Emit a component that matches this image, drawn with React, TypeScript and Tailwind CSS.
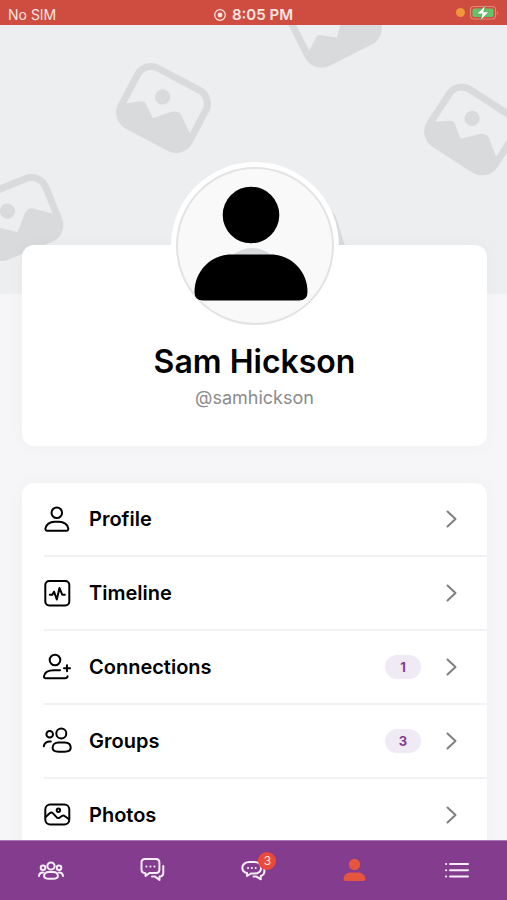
import React from 'react';

const Placeholder = ({ transform }: { transform: string }) => (
  <g transform={transform}>
    <rect x="-38.5" y="-32.5" width="77" height="65" rx="15" fill="none" stroke="#d9dadc" strokeWidth="7" />
    <path
      d="M-38 15.500L-23 4.500Q-20 2.500-17 5L-4.500 14L9 -0.500Q15.500 -6 21 -0.500L38 12V18A15 15 0 0 1 24 33H-24A15 15 0 0 1-38 18Z"
      fill="#d9dadc"
    />
    <circle cx="-6" cy="-9.300" r="7.600" fill="#d9dadc" />
  </g>
);

const Cover = () => (
  <svg viewBox="0 25 507 269" preserveAspectRatio="xMidYMid slice" className="block h-[269px] w-full bg-[#edeef0]" aria-hidden="true">
    <Placeholder transform="translate(163.500 108) rotate(28)" />
    <Placeholder transform="translate(472 129.500) rotate(33)" />
    <Placeholder transform="translate(16.500 217.500) rotate(-22)" />
    <Placeholder transform="translate(334.500 23) rotate(-27)" />
    <Placeholder transform="translate(302 249) rotate(-17)" />
  </svg>
);

const Icon = ({ children }: { children: React.ReactNode }) => (
  <svg
    viewBox="0 0 30 30"
    className="h-[30px] w-[30px] shrink-0"
    fill="none"
    stroke="currentColor"
    strokeWidth="2"
    strokeLinecap="round"
    strokeLinejoin="round"
    aria-hidden="true"
  >
    {children}
  </svg>
);

const menuItems = [
  {
    label: 'Profile',
    icon: (
      <>
        <circle cx="14.8" cy="8.700" r="5.300" />
        <path d="M3.400 24.500C3.800 20.500 8 17.700 12.500 17.700H17C21.800 17.700 26 20.500 26.300 24.500C26.400 26 25.700 26.700 24.400 26.700H5.300C4 26.700 3.300 26 3.400 24.500Z" />
      </>
    ),
  },
  {
    label: 'Timeline',
    icon: (
      <>
        <rect x="3.300" y="3" width="24" height="24.500" rx="4" />
        <path d="M7.800 16.700H10.300L12 13.700L14.800 21.500L17.500 10L20.200 16.700H22.800" />
      </>
    ),
  },
  {
    label: 'Connections',
    count: 1,
    icon: (
      <>
        <circle cx="13" cy="8" r="5.300" />
        <path d="M18 18.200H12C6.500 18.200 2.500 20.500 2 24.300C1.800 25.700 2.500 26.300 3.800 26.300H23C24.400 26.300 25.300 25.600 25.600 24.300" />
        <path d="M25 13.300V19.300M22 16.300H28" />
      </>
    ),
  },
  {
    label: 'Groups',
    count: 3,
    icon: (
      <>
        <circle cx="7.700" cy="8.300" r="3.300" />
        <circle cx="19.300" cy="7.500" r="5" />
        <path d="M16.500 16.500H22.500C26.500 16.500 28.700 18.800 28.700 21.800C28.700 24.800 26 25.700 22.500 25.700H16.500C12.500 25.700 10.600 24.600 10.600 21.800C10.600 18.600 13 16.500 16.500 16.500Z" />
        <path d="M8.800 15.500C4.500 15.300 2.300 16.500 1.800 20.300" />
      </>
    ),
  },
  {
    label: 'Photos',
    icon: (
      <>
        <rect x="3.300" y="4.500" width="24" height="20" rx="5" />
        <path d="M3.600 17L7.700 13.300C8.800 12.300 10 12.400 11 13.400L14.800 17.400C15.800 18.300 16.800 18.300 17.800 17.500L19.500 16.200C20.700 15.300 21.800 15.300 22.900 16.200L27 19.300" />
        <circle cx="16.400" cy="10.300" r="1.700" />
      </>
    ),
  },
];

const tabs = [
  {
    label: 'Members',
    icon: (
      <>
        <circle cx="15" cy="10" r="3.600" />
        <circle cx="7" cy="11.800" r="2.300" />
        <circle cx="23" cy="11.800" r="2.300" />
        <path d="M13 16H17C20 16 21.900 17.500 21.900 20C21.900 22.300 20 22.800 17 22.800H13C10 22.800 8.100 22.300 8.100 20C8.100 17.500 10 16 13 16Z" />
        <path d="M7 16.500C4.500 16.500 3.200 17.800 3 20M23 16.500C25.500 16.500 26.800 17.800 27 20" />
      </>
    ),
  },
  {
    label: 'Forums',
    icon: (
      <>
        <path d="M8 3H19Q22.400 3 22.400 6.500V13.500Q22.400 17 19 17H12.500L8.500 20V17.200Q4.500 17 4.500 13.500V6.500Q4.500 3 8 3Z" />
        <path d="M26.300 10V16.500Q26.300 20.500 22.500 20.600V24L18 20.600H15" />
        <path d="M9.400 10.500H9.500M13.400 10.500H13.500M17.400 10.500H17.500" />
      </>
    ),
  },
  {
    label: 'Messages',
    count: 3,
    icon: (
      <>
        <path d="M11.500 6H16.500C20.500 6 23.100 8.400 23.100 11.700C23.100 15.200 20.500 17.500 16.500 17.500H13L9 20V17C6 16.300 4.300 14.300 4.300 11.700C4.300 8.400 7.500 6 11.500 6Z" />
        <path d="M26.300 13.500C26.800 17 25.500 19.200 22.800 20V23.300L18.500 20.600H15.500" />
        <path d="M10 11.900H10.100M13.800 11.900H13.900M17.600 11.900H17.700" />
      </>
    ),
  },
  {
    label: 'Account',
    active: true,
    icon: (
      <g fill="currentColor" stroke="none">
        <circle cx="14.500" cy="8.500" r="5.700" />
        <path d="M10.500 16.500H18.500C22.500 16.500 25.400 19.500 25.400 23Q25.400 25 23.400 25H5.500Q3.500 25 3.500 23C3.500 19.500 6.500 16.500 10.500 16.500Z" />
      </g>
    ),
  },
  {
    label: 'More',
    icon: <path d="M5 8H5.200M9 8H27M5 14.300H5.200M9 14.300H27M5 20.600H5.200M9 20.600H27" />,
  },
];

const StatusBar = () => (
  <header className="grid h-[25px] shrink-0 grid-cols-3 items-center bg-[#ce4d40] px-2 pt-1 text-sm leading-5 text-[#fbe5e0]">
    <span>No SIM</span>
    <span className="flex items-center justify-center gap-1.5 text-[15px] font-semibold">
      <svg viewBox="0 0 12 12" className="h-3 w-3" aria-hidden="true">
        <circle cx="6" cy="6" r="5.300" fill="none" stroke="currentColor" strokeWidth="1.200" />
        <circle cx="6" cy="6" r="2.400" fill="currentColor" />
      </svg>
      8:05 PM
    </span>
    <span className="flex items-center justify-end gap-1 pb-1">
      <span className="h-[9px] w-[9px] rounded-full bg-[#f0963a]"></span>
      <svg viewBox="0 0 30 16" className="h-4 w-[30px]" aria-label="Battery charging">
        <rect x="1.500" y="1.500" width="25" height="12.500" rx="3.500" fill="none" stroke="#df8a75" strokeWidth="1.200" />
        <rect x="3.500" y="3.500" width="21" height="8.500" rx="2" fill="#5fc766" />
        <path d="M28 6V10Q30 8 28 6Z" fill="#df8a75" />
        <path d="M16.500 0.500L7.500 9H13L11.500 15.500L20 6.800H14.800Z" fill="#fff" stroke="#5b9354" strokeWidth="0.700" />
      </svg>
    </span>
  </header>
);

const Avatar = () => (
  <div className="-mt-[83px] h-[168px] w-[168px] rounded-full bg-white p-[5px]">
    <svg viewBox="0 0 158 158" className="block h-full w-full" role="img" aria-label="Sam Hickson">
      <circle cx="79" cy="79" r="78" fill="#f9f9f9" stroke="#e3e3e4" strokeWidth="2" />
      <path d="M54 90Q76 72 98 90Z" fill="#d9dadc" />
      <circle cx="75" cy="48" r="28.300" />
      <path d="M55 87.500H95C115 87.500 131.500 104 131.500 125Q131.500 133.500 123 133.500H27Q18.500 133.500 18.500 125C18.500 104 35 87.500 55 87.500Z" />
    </svg>
  </div>
);

const App = () => {
  return (
    <div className="flex h-screen flex-col bg-[#f6f6f8] font-['Inter',sans-serif] text-black">
      <StatusBar />

      <main className="min-h-0 flex-1 overflow-hidden">
        <Cover />

        <section className="relative -mt-[49px] mr-5 ml-[22px] flex flex-col items-center rounded-xl bg-white pb-8 shadow-[0_0_16px_rgba(0,0,0,0.03)]">
          <Avatar />
          <h1 className="mt-3 text-[32px] leading-[40px] font-semibold">Sam Hickson</h1>
          <p className="text-lg leading-8 text-[#8b8b8d]">@samhickson</p>
        </section>

        {/* Account menu */}
        <ul className="mt-[37px] mr-5 ml-[22px] rounded-t-xl bg-white pl-[22px] shadow-[0_0_16px_rgba(0,0,0,0.03)]">
          {menuItems.map((item) => (
            <li key={item.label} className="border-b-2 border-[#f2f2f3]">
              <a href="#" className="flex h-[72px] items-center pr-6">
                <span className="-ml-0.5 flex">
                  <Icon>{item.icon}</Icon>
                </span>
                <span className="ml-[17px] flex-1 text-xl leading-7 font-semibold">{item.label}</span>
                {item.count && (
                  <span className="mr-[18px] flex h-6 w-9 items-center justify-center rounded-full bg-[#f0eaf4] text-[13px] leading-5 font-bold text-[#833c91]">
                    {item.count}
                  </span>
                )}
                <svg viewBox="0 0 24 24" className="h-6 w-6 text-[#7f7f81]" fill="none" stroke="currentColor" strokeWidth="2" strokeLinecap="round" strokeLinejoin="round" aria-hidden="true">
                  <path d="M8.500 4.500L16.500 12L8.500 19.500" />
                </svg>
              </a>
            </li>
          ))}
        </ul>
      </main>

      <nav className="grid h-[60px] shrink-0 grid-cols-5 border-t border-[#a777b1] bg-[#833c8e] text-[#f8eefa]">
        {tabs.map((tab) => (
          <a
            key={tab.label}
            href="#"
            aria-label={tab.label}
            className={`flex items-center justify-center ${tab.active ? 'text-[#e5553f]' : ''}`}
          >
            <span className="relative flex">
              <Icon>{tab.icon}</Icon>
              {tab.count && (
                <span className="absolute -top-1 -right-2 flex h-[18px] w-[18px] items-center justify-center rounded-full bg-[#e94b3a] text-xs leading-4 text-[#fbe5e0]">
                  {tab.count}
                </span>
              )}
            </span>
          </a>
        ))}
      </nav>
    </div>
  );
};

export default App;
